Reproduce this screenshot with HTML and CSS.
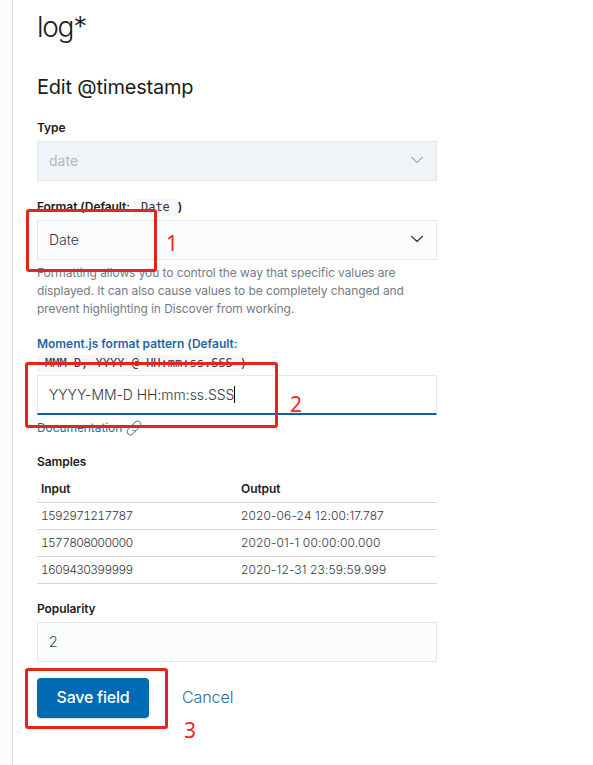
FILE: index.html
```html
<!DOCTYPE html>
<html lang="en">
<head>
<meta charset="utf-8">
<title>Edit @timestamp</title>
<link rel="stylesheet" href="styles.css">
</head>
<body>
<div class="page">
  <main class="panel">
    <h1 class="title">log*</h1>
    <h2 class="subtitle">Edit @timestamp</h2>
    <form class="form">
      <div class="row row-type">
        <div class="label">Type</div>
        <div class="field disabled"><span>date</span>
          <svg class="chevron" viewBox="0 0 16 16"><path d="M2.5 5.3 L8 10.5 L13.5 5.3"/></svg>
        </div>
      </div>
      <div class="row row-format">
        <div class="label">Format (Default: <code>Date</code> )</div>
        <div class="field"><span>Date</span>
          <svg class="chevron" viewBox="0 0 16 16"><path d="M2.5 5.3 L8 10.5 L13.5 5.3"/></svg>
        </div>
        <p class="help">Formatting allows you to control the way that specific values are displayed. It can also cause values to be completely changed and prevent highlighting in Discover from working.</p>
      </div>
      <div class="row row-pattern">
        <div class="label active">Moment.js format pattern (Default:<br><span class="dark"><code>MMM D, YYYY @ HH:mm:ss.SSS</code> )</span></div>
        <div class="field focused"><span>YYYY-MM-D HH:mm:ss.SSS</span><i class="caret"></i></div>
        <a class="doc">Documentation
          <svg class="link" viewBox="0 0 16 16"><path d="M6.2 5.1 L9 2.2 C10.4 .8 12.5 .7 13.8 2 C15.2 3.4 15.1 5.5 13.8 6.9 L10.8 9.8 C9.5 11.1 7.6 11.1 6.3 9.9 M9.8 10.9 L7 13.8 C5.6 15.2 3.5 15.3 2.2 14 C.8 12.6 .9 10.5 2.2 9.1 L5.2 6.2 C6.5 4.9 8.4 4.9 9.7 6.1"/></svg>
        </a>
      </div>
      <div class="row row-samples">
        <div class="label">Samples</div>
        <table class="samples">
          <thead><tr><th>Input</th><th>Output</th></tr></thead>
          <tbody>
            <tr><td>1592971217787</td><td>2020-06-24 12:00:17.787</td></tr>
            <tr><td>1577808000000</td><td>2020-01-1 00:00:00.000</td></tr>
            <tr><td>1609430399999</td><td>2020-12-31 23:59:59.999</td></tr>
          </tbody>
        </table>
      </div>
      <div class="row row-popularity">
        <div class="label">Popularity</div>
        <div class="field"><span>2</span></div>
      </div>
      <div class="actions">
        <button class="save" type="button">Save field</button>
        <a class="cancel">Cancel</a>
      </div>
    </form>
  </main>
  <div class="mark mark-1"></div><span class="num num-1">1</span>
  <div class="mark mark-2"></div><span class="num num-2">2</span>
  <div class="mark mark-3"></div><span class="num num-3">3</span>
</div>
</body>
</html>
```
FILE: styles.css
```css
* { box-sizing: border-box; }
body {
  margin: 0;
  background: #fafbfd;
  font-family: Inter, "Liberation Sans", sans-serif;
  color: #343741;
  letter-spacing: -0.005em;
}
.page { position: relative; height: 765px; padding-left: 12px; overflow: hidden; }
.panel { height: 765px; padding: 7px 0 0 24px; background: #fff; border-left: 1px solid #d3dae6; }
.title { margin: 0; height: 40px; line-height: 41px; font-size: 28px; font-weight: 300; letter-spacing: -0.045em; color: #1a1c21; }
.subtitle { margin: 24px 0 0; height: 32px; line-height: 32px; font-size: 20px; font-weight: 400; letter-spacing: -0.01em; color: #1a1c21; }
.form { width: 400px; }
.row-type { margin-top: 16px; }
.row-format { margin-top: 17px; }
.row-pattern { margin-top: 16px; }
.row-samples { margin-top: 16px; }
.row-popularity { margin-top: 16px; }
.label { height: 22px; line-height: 18px; font-size: 12px; font-weight: 600; color: #1a1c21; white-space: nowrap; }
.label code { display: inline-block; height: 17px; margin-right: -3px; padding: 0 8px; background: #f5f7fa; font: 400 12px/17px "DejaVu Sans Mono", monospace; letter-spacing: 0; color: #343741; }
.label.active { height: 41px; color: #1f66a5; line-height: 19px; letter-spacing: -0.02px; }
.dark { color: #1a1c21; font-weight: 400; }
.field { display: flex; align-items: center; height: 40px; padding: 0 11px; border: 1px solid #e3e7ef; background: #fbfcfd; font-size: 14px; font-weight: 350; letter-spacing: 0; }
.field > span { flex: none; padding-bottom: 1px; }
.disabled { background: #f0f4f8; color: #b2b8c6; font-weight: 400; }
.focused { background: #fff; border-bottom: 2px solid #0a62a5; letter-spacing: -0.03px; }
.focused > span { padding-bottom: 0; }
.chevron { width: 16px; height: 16px; margin: -2px 0 0 auto; fill: none; stroke: #343741; stroke-width: 1.2; stroke-linecap: round; stroke-linejoin: round; }
.disabled .chevron { stroke: #a9afbb; }
.caret { width: 1px; height: 17px; background: #000; }
.help { margin: 4px 0 0; font-size: 12px; line-height: 18px; color: #757b87; }
.doc { display: flex; align-items: center; height: 18px; margin-top: 4px; padding-bottom: 2px; font-size: 12px; color: #2b6ca3; gap: 4px; }
.link { width: 16px; height: 16px; margin-top: 2px; fill: none; stroke: #2b6ca3; stroke-width: 1; flex: none; }
.samples { width: 400px; border-collapse: collapse; table-layout: fixed; font-size: 12px; }
.samples th, .samples td { height: 27px; padding: 0 4px; text-align: left; border-bottom: 1px solid #d3d6dc; }
.samples th { font-weight: 600; color: #1a1c21; }
.samples td { font-weight: 350; letter-spacing: 0.12px; }
.samples td:first-child { font-variant-numeric: tabular-nums; letter-spacing: -0.72px; }
.actions { display: flex; align-items: center; margin-top: 16px; }
.save { width: 112px; height: 40px; padding: 0 0 2px; border: 0; border-radius: 4px; background: #006bb4; color: #fff; font: 500 16px Inter, sans-serif; letter-spacing: -0.015em; box-shadow: 0 2px 2px -1px rgba(54, 97, 126, .3); }
.cancel { margin-left: 33px; padding-bottom: 2px; font-size: 16px; font-weight: 350; color: #2b6ca3; }
.mark { position: absolute; border: 3px solid #e3261c; border-radius: 3px; }
.mark-1 { left: 26px; top: 209px; width: 131px; height: 63px; }
.mark-2 { left: 25px; top: 362px; width: 253px; height: 66px; }
.mark-3 { left: 25px; top: 668px; width: 143px; height: 61px; }
.num { position: absolute; font: 21px/24px "Noto Sans", sans-serif; color: #f0281e; }
.num-1 { left: 166px; top: 231px; }
.num-2 { left: 290px; top: 392px; }
.num-3 { left: 184px; top: 718px; }
```
